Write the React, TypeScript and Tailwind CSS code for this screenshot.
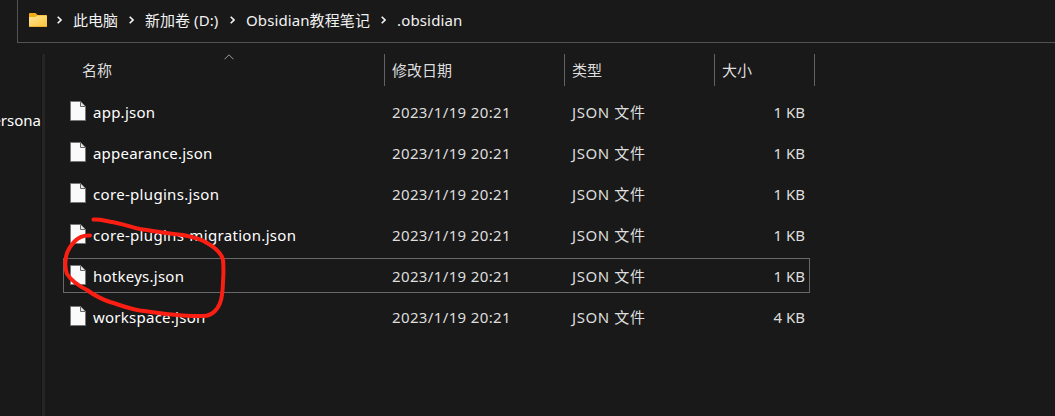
import { Fragment } from "react";

const crumbs = [
  { label: "此电脑", width: "w-[45px]" },
  { label: "新加卷 (D:)", width: "w-[74px] tracking-[0.05px]" },
  { label: "Obsidian教程笔记", width: "w-[124px] tracking-[0.1px]" },
  { label: ".obsidian", width: "w-[80px] tracking-[0.15px]" },
];

const files = [
  { name: "app.json", size: "1 KB", tracking: "tracking-[0.25px]" },
  { name: "appearance.json", size: "1 KB", tracking: "tracking-[0.2px]" },
  { name: "core-plugins.json", size: "1 KB", tracking: "tracking-[0.32px]" },
  { name: "core-plugins-migration.json", size: "1 KB", tracking: "tracking-[0.32px]" },
  { name: "hotkeys.json", size: "1 KB", tracking: "tracking-[0.25px]", selected: true },
  { name: "workspace.json", size: "4 KB", tracking: "tracking-[0.25px]" },
];

function FolderIcon() {
  return (
    <svg width="18" height="14" viewBox="0 0 18 14" className="shrink-0">
      <defs>
        <linearGradient id="folder" x1="0" y1="0" x2="1" y2="1">
          <stop offset="0" stopColor="#ffe597" />
          <stop offset="1" stopColor="#fbc436" />
        </linearGradient>
      </defs>
      <path d="M0 1Q0 0 1 0H6.5L8.5 2H17Q18 2 18 3V8H0Z" fill="#f5ad13" />
      <path d="M0 4H6.2L8.3 2.4H17.3Q18 2.4 18 3.2V13.2Q18 14 17.2 14H.8Q0 14 0 13.2Z" fill="url(#folder)" />
      <path d="M.4 13.6H17.6" stroke="#e7a41d" strokeWidth=".8" />
    </svg>
  );
}

function FileIcon() {
  return (
    <svg width="16" height="20" viewBox="0 0 16 20" className="shrink-0">
      <path d="M.5.5H10.6L15.5 5.4V19.5H.5Z" fill="#fafafa" stroke="#777" />
      <path d="M10.5.8V5.5H15.2" fill="#e6e6e6" stroke="#666" />
    </svg>
  );
}

function Chevron() {
  return (
    <svg width="5" height="8" viewBox="0 0 5 8" className="shrink-0">
      <path d="M.7.7L4 4L.7 7.3" fill="none" stroke="#f2f2f2" strokeWidth="1.6" />
    </svg>
  );
}

export default function App() {
  return (
    <div className="relative flex h-[416px] w-[1055px] flex-col overflow-hidden bg-[#191919] font-['Noto_Sans','Noto_Sans_CJK_SC',sans-serif] text-[15px] leading-[20px] whitespace-nowrap text-[#dedede]">
      <header className="ml-[17px] flex h-[43px] shrink-0 items-center border-b border-l border-[#535353] pb-[2px] pl-[11px] text-[#f2f2f2]">
        <FolderIcon />
        <div className="flex items-center pl-[10px]">
          {crumbs.map((crumb) => (
            <Fragment key={crumb.label}>
              <Chevron />
              <span className={`mr-[11px] ml-[11px] ${crumb.width}`}>{crumb.label}</span>
            </Fragment>
          ))}
        </div>
      </header>
      <div className="flex min-h-0 flex-1 pt-[11px]">
        <aside className="flex w-[41px] shrink-0 justify-end overflow-hidden pt-[56px] text-white">
          <span>Persona</span>
        </aside>
        <div className="h-full w-[4px] shrink-0 border-l border-[#141414] bg-[#252525]" />
        <main className="ml-[18px] w-[752px]">
          <div className="flex h-[32px] items-center">
            <div className="relative flex h-full w-[321px] items-center pl-[19px]">
              名称
              <svg width="10" height="6" viewBox="0 0 10 6" className="absolute top-0 left-[161px]">
                <path d="M.5 5.3L5 .8L9.5 5.3" fill="none" stroke="#9b9b9b" />
              </svg>
            </div>
            <div className="flex h-full w-[180px] items-center border-l border-[#636363] pl-[7px]">修改日期</div>
            <div className="flex h-full w-[150px] items-center border-l border-[#636363] pl-[7px]">类型</div>
            <div className="flex h-full w-[101px] items-center border-x border-[#636363] pl-[7px]">大小</div>
          </div>
          <div className="flex w-[747px] flex-col gap-[6px] pt-[8px]">
            {files.map((file) => (
              <div
                key={file.name}
                className={`flex h-[35px] items-start border pt-[6px] ${file.selected ? "border-[#686868]" : "border-transparent"}`}
              >
                <div className="flex w-[328px] items-start gap-[7px] pl-[6px] text-white">
                  <FileIcon />
                  <span className={`pt-px ${file.tracking}`}>{file.name}</span>
                </div>
                <div className="w-[180px] pt-px tracking-[0.37px]">2023/1/19 20:21</div>
                <div className="w-[150px] pt-px tracking-[0.6px]">JSON 文件</div>
                <div className="flex-1 pt-px pr-[4px] text-right">{file.size}</div>
              </div>
            ))}
          </div>
        </main>
      </div>
      <svg width="1055" height="416" viewBox="0 0 1055 416" className="pointer-events-none absolute inset-0">
        <path
          d="M93.500 219.500C101 219 105 221 110 221.700C121 223 130 227 140 229C155 231 169 234 183 235C193 237 201 239 207 243C216 248 220 252 222.500 258C224 262 223 267 223.500 272C223 281 223 288 222 295C221 303 219 307 215 311C211 315 207 316 203 316C194 316 186 315.500 177 315C164 314 152 312 140 310.500C130 309 120 305 110 302C101 299 94 295 87 290C79 286 71 280 67 274C65 269 65 263 66 257C67 251 70 246 75 241C80 236 85 235 90 235.500"
          fill="none"
          stroke="#fa1e13"
          strokeWidth="4"
          strokeLinecap="round"
          strokeLinejoin="round"
        />
      </svg>
    </div>
  );
}
